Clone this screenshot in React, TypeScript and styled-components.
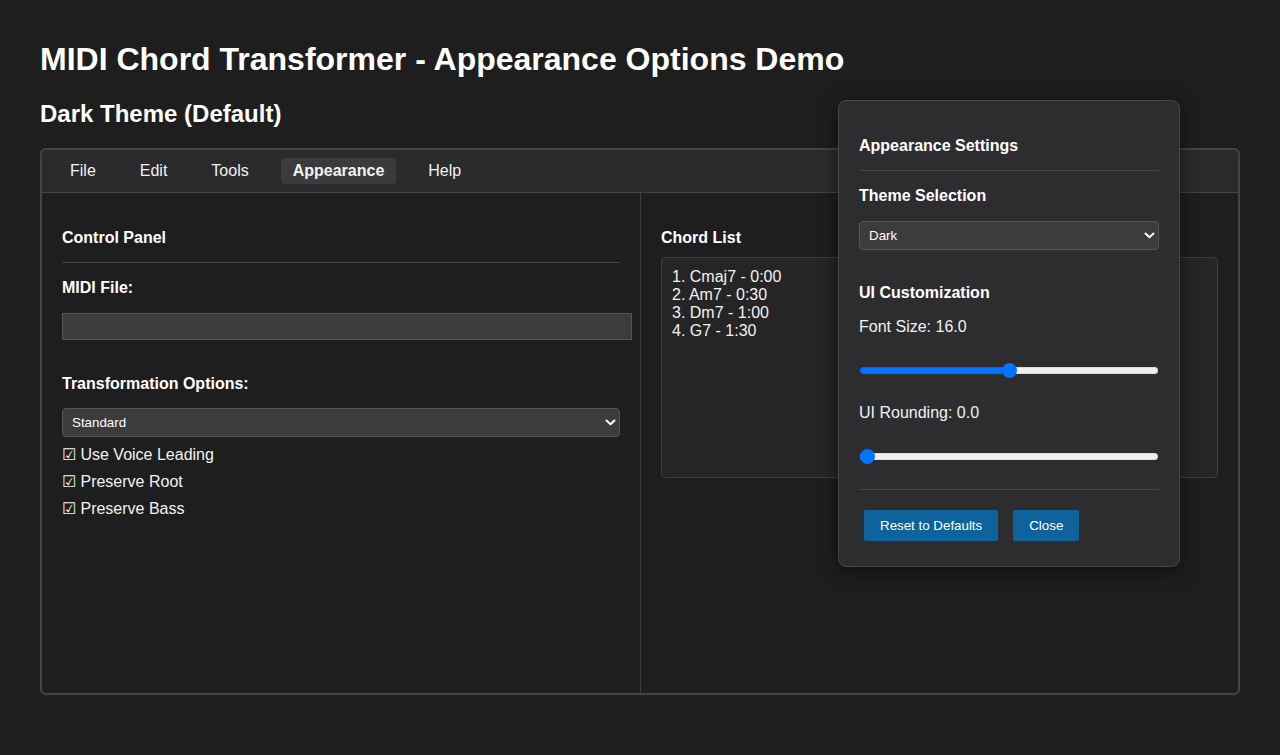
import React, { useState } from "react";
import styled, { createGlobalStyle } from "styled-components";

const GlobalStyle = createGlobalStyle`
  html, body { margin: 0; padding: 0; background: #1e1e1e; }
  body { font-family: "Liberation Sans", Arial, sans-serif; color: #ffffff; }
  * { box-sizing: border-box; }
`;

const Page = styled.div`
  position: relative;
  min-height: 755px;
  padding: 41px 40px 0;
`;

const Title = styled.h1`
  margin: 0;
  font-size: 32px;
  line-height: 37px;
  font-weight: 700;
`;

const Subtitle = styled.h2`
  margin: 22px 0 20px;
  font-size: 24px;
  line-height: 28px;
  font-weight: 700;
`;

const Frame = styled.div`
  border: 2px solid #444444;
  border-radius: 6px;
  background: #1e1e1e;
`;

const MenuBar = styled.nav`
  display: flex;
  gap: 20px;
  padding: 8px 16px;
  background: #2b2b2d;
  border-bottom: 1px solid #444444;
  border-radius: 4px 4px 0 0;
`;

const MenuItem = styled.span<{ $active?: boolean }>`
  padding: 4px 12px;
  font-size: 16px;
  line-height: 18px;
  border-radius: 4px;
  color: #f2f2f2;
  font-weight: ${(p) => (p.$active ? 700 : 400)};
  background: ${(p) => (p.$active ? "#3b3b3d" : "transparent")};
`;

const Body = styled.div`
  display: grid;
  grid-template-columns: 599px 1fr;
  height: 500px;
`;

const Panel = styled.section<{ $divider?: boolean }>`
  display: flex;
  flex-direction: column;
  padding: 20px;
  border-right: ${(p) => (p.$divider ? "1px solid #3e3e3e" : "none")};
`;

const PanelTitle = styled.h3<{ $divided?: boolean }>`
  margin: 16px 0 0;
  font-size: 16px;
  line-height: 18px;
  font-weight: 700;
  padding-bottom: ${(p) => (p.$divided ? "15px" : "0")};
  border-bottom: ${(p) => (p.$divided ? "1px solid #444444" : "none")};
`;

const FieldLabel = styled.div<{ $mt: number }>`
  margin-top: ${(p) => p.$mt}px;
  font-size: 16px;
  line-height: 18px;
  font-weight: 700;
`;

const TextInput = styled.input`
  margin-top: 16px;
  width: calc(100% + 12px);
  height: 27px;
  padding: 5px;
  background: #3c3c3c;
  border: 1px solid #555555;
  border-radius: 0;
  color: #ffffff;
  font-family: inherit;
  font-size: 13.33px;
  outline: none;
`;

const SelectWrap = styled.div<{ $mt: number }>`
  position: relative;
  margin-top: ${(p) => p.$mt}px;
`;

const Select = styled.select`
  appearance: none;
  -webkit-appearance: none;
  display: block;
  width: 100%;
  height: 29px;
  padding: 0 24px 0 9px;
  background: #3c3c3c;
  border: 1px solid #555555;
  border-radius: 4px;
  color: #ffffff;
  font-family: inherit;
  font-size: 13.33px;
  outline: none;
`;

const Chevron = styled.svg`
  position: absolute;
  right: 4px;
  top: 11px;
  pointer-events: none;
`;

const CheckList = styled.div`
  margin-top: 9px;
  display: flex;
  flex-direction: column;
  gap: 9px;
`;

const CheckLine = styled.div`
  font-size: 16px;
  line-height: 18px;
  color: #f2f2f2;
`;

const ChordBox = styled.div`
  margin-top: 10px;
  min-height: 221px;
  padding: 10px;
  background: #252526;
  border: 1px solid #3e3e3e;
  border-radius: 4px;
  font-size: 16px;
  line-height: 18px;
  color: #f2f2f2;
`;

const Popup = styled.div`
  position: absolute;
  top: 100px;
  left: 838px;
  width: 342px;
  display: flex;
  flex-direction: column;
  padding: 20px 20px 25px;
  background: #2d2d30;
  border: 1px solid #454545;
  border-radius: 8px;
  box-shadow: 0 4px 18px rgba(0, 0, 0, 0.55);
`;

const PopupTitle = styled.h3`
  margin: 16px 0 0;
  padding-bottom: 15px;
  border-bottom: 1px solid #47474a;
  font-size: 16px;
  line-height: 18px;
  font-weight: 700;
`;

const SectionTitle = styled.h4<{ $mt: number }>`
  margin: ${(p) => p.$mt}px 0 0;
  font-size: 16px;
  line-height: 18px;
  font-weight: 700;
`;

const ValueLabel = styled.div<{ $mt: number }>`
  margin-top: ${(p) => p.$mt}px;
  font-size: 16px;
  line-height: 18px;
  color: #f2f2f2;
`;

const Range = styled.input<{ $pct: number }>`
  -webkit-appearance: none;
  appearance: none;
  display: block;
  width: calc(100% - 2px);
  height: 16px;
  margin: 26px 1px 25px;
  padding: 0;
  background: transparent;
  outline: none;

  &::-webkit-slider-runnable-track {
    height: 7px;
    border-radius: 4px;
    background: linear-gradient(
      to right,
      #0075ff 0,
      #0075ff ${(p) => p.$pct}%,
      #efefef ${(p) => p.$pct}%,
      #efefef 100%
    );
    box-shadow: inset 0 0 0 1px rgba(0, 0, 0, 0.08);
  }

  &::-webkit-slider-thumb {
    -webkit-appearance: none;
    appearance: none;
    width: 15px;
    height: 15px;
    margin-top: -4px;
    border-radius: 50%;
    background: #0075ff;
    border: none;
  }
`;

const Divider = styled.hr`
  margin: 0;
  border: none;
  border-top: 1px solid #47474a;
`;

const ButtonRow = styled.div`
  display: flex;
  gap: 15px;
  margin-top: 20px;
  padding-left: 5px;
`;

const Button = styled.button`
  height: 31px;
  padding: 0 16px;
  background: #0e639c;
  border: none;
  border-radius: 2px;
  color: #ffffff;
  font-family: inherit;
  font-size: 13.33px;
`;

const ChevronIcon = () => (
  <Chevron width="11" height="7" viewBox="0 0 11 7">
    <polyline points="1.5,1.5 5.5,5.2 9.5,1.5" fill="none" stroke="#ffffff" strokeWidth="2" strokeLinecap="round" strokeLinejoin="round" />
  </Chevron>
);

const menu = ["File", "Edit", "Tools", "Appearance", "Help"];
const chords = ["1. Cmaj7 - 0:00", "2. Am7 - 0:30", "3. Dm7 - 1:00", "4. G7 - 1:30"];
const options = ["Use Voice Leading", "Preserve Root", "Preserve Bass"];

export default function App() {
  const [fontSize, setFontSize] = useState(16);
  const [rounding, setRounding] = useState(0);
  const fontPct = ((fontSize - 8) / 16) * 100;
  const roundPct = (rounding / 12) * 100;

  return (
    <Page>
      <GlobalStyle />
      <Title>MIDI Chord Transformer - Appearance Options Demo</Title>
      <Subtitle>Dark Theme (Default)</Subtitle>
      <Frame>
        <MenuBar>
          {menu.map((m) => (
            <MenuItem key={m} $active={m === "Appearance"}>
              {m}
            </MenuItem>
          ))}
        </MenuBar>
        <Body>
          <Panel $divider>
            <PanelTitle $divided>Control Panel</PanelTitle>
            <FieldLabel $mt={16}>MIDI File:</FieldLabel>
            <TextInput type="text" readOnly />
            <FieldLabel $mt={35}>Transformation Options:</FieldLabel>
            <SelectWrap $mt={15}>
              <Select defaultValue="Standard">
                <option>Standard</option>
                <option>Jazz</option>
                <option>Classical</option>
              </Select>
              <ChevronIcon />
            </SelectWrap>
            <CheckList>
              {options.map((o) => (
                <CheckLine key={o}>☑ {o}</CheckLine>
              ))}
            </CheckList>
          </Panel>
          <Panel>
            <PanelTitle>Chord List</PanelTitle>
            <ChordBox>
              {chords.map((c) => (
                <div key={c}>{c}</div>
              ))}
            </ChordBox>
          </Panel>
        </Body>
      </Frame>

      <Popup>
        <PopupTitle>Appearance Settings</PopupTitle>
        <SectionTitle $mt={16}>Theme Selection</SectionTitle>
        <SelectWrap $mt={16}>
          <Select defaultValue="Dark">
            <option>Dark</option>
            <option>Light</option>
            <option>Classic</option>
          </Select>
          <ChevronIcon />
        </SelectWrap>
        <SectionTitle $mt={34}>UI Customization</SectionTitle>
        <ValueLabel $mt={16}>Font Size: {fontSize.toFixed(1)}</ValueLabel>
        <Range
          type="range"
          min={8}
          max={24}
          step={0.5}
          value={fontSize}
          $pct={fontPct}
          onChange={(e) => setFontSize(Number(e.target.value))}
        />
        <ValueLabel $mt={1}>UI Rounding: {rounding.toFixed(1)}</ValueLabel>
        <Range
          type="range"
          min={0}
          max={12}
          step={0.5}
          value={rounding}
          $pct={roundPct}
          onChange={(e) => setRounding(Number(e.target.value))}
        />
        <Divider />
        <ButtonRow>
          <Button>Reset to Defaults</Button>
          <Button>Close</Button>
        </ButtonRow>
      </Popup>
    </Page>
  );
}
